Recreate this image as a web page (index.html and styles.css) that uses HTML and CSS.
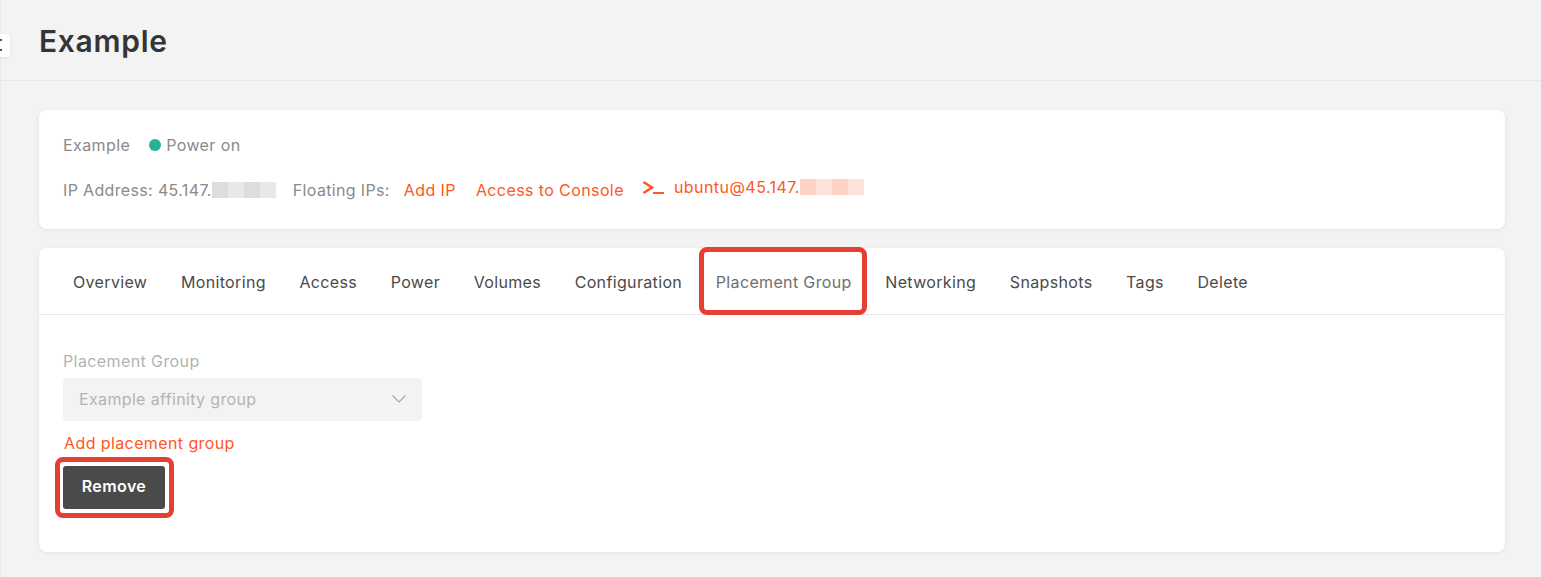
FILE: index.html
```html
<!DOCTYPE html>
<html lang="en">
<head>
<meta charset="utf-8">
<title>Example</title>
<link rel="stylesheet" href="styles.css">
</head>
<body>
<div class="app">
  <div class="side-toggle"><svg width="10" height="23" viewBox="0 0 10 23" aria-hidden="true"><rect x="0" y="5" width="2" height="2" fill="#555"/><rect x="0" y="15" width="2" height="2" fill="#555"/></svg></div>
  <header class="page-header"><h1>Example</h1></header>
  <main class="content">
    <section class="card info">
      <div class="info-row first">
        <span>Example</span>
        <span class="status"><i class="dot"></i>Power on</span>
      </div>
      <div class="info-row second">
        <span class="ip">IP Address: 45.147.<span class="redact grey"><i></i><i></i><i></i><i></i></span></span>
        <span class="floating">Floating IPs:</span>
        <a class="link add-ip">Add IP</a>
        <a class="link console">Access to Console</a>
        <svg class="term" width="24" height="16" viewBox="0 0 24 16" aria-hidden="true"><path d="M1.5 2 L10 7.5 L1.5 13" fill="none" stroke="#ff5722" stroke-width="2.6"/><rect x="11" y="12" width="11" height="2" fill="#ff5722"/></svg>
        <a class="link ssh">ubuntu@45.147.<span class="redact orange"><i></i><i></i><i></i><i></i></span></a>
      </div>
    </section>
    <section class="card detail">
      <nav class="tabs">
        <a class="tab">Overview</a>
        <a class="tab">Monitoring</a>
        <a class="tab">Access</a>
        <a class="tab">Power</a>
        <a class="tab">Volumes</a>
        <a class="tab">Configuration</a>
        <a class="tab active">Placement Group</a>
        <a class="tab">Networking</a>
        <a class="tab">Snapshots</a>
        <a class="tab">Tags</a>
        <a class="tab">Delete</a>
      </nav>
      <div class="panel">
        <label class="field-label">Placement Group</label>
        <div class="select">
          <span>Example affinity group</span>
          <svg width="16" height="10" viewBox="0 0 16 10" aria-hidden="true"><path d="M1.5 1.5 L8 8 L14.5 1.5" fill="none" stroke="#a8a8a8" stroke-width="1.2"/></svg>
        </div>
        <a class="link add-group">Add placement group</a>
        <button class="remove" type="button">Remove</button>
      </div>
    </section>
  </main>
  <div class="mark mark-tab"></div>
  <div class="mark mark-remove"></div>
</div>
</body>
</html>
```
FILE: styles.css
```css
* { box-sizing: border-box; }
html, body { margin: 0; height: 100%; }
body {
  background: #f3f3f3;
  font-family: Inter, "Liberation Sans", sans-serif;
  font-size: 16px;
  letter-spacing: .4px;
  color: #8a8a8a;
  overflow: hidden;
}
.app {
  position: relative;
  height: 577px;
  border-left: 1px solid #e8e8e8;
}
.side-toggle {
  position: absolute;
  left: -1px;
  top: 34px;
  width: 10px;
  height: 23px;
  background: #fff;
  border-radius: 0 4px 4px 0;
  box-shadow: 0 1px 3px rgba(0,0,0,.08);
  overflow: hidden;
}
.side-toggle svg { display: block; }
.page-header {
  height: 81px;
  padding: 2px 38px 0;
  border-bottom: 1px solid #e8e8e8;
  display: flex;
  align-items: center;
}
.page-header h1 {
  margin: 0;
  font-size: 30px;
  line-height: 40px;
  font-weight: 600;
  letter-spacing: .7px;
  color: #353535;
}
.content {
  padding: 29px 36px 0 38px;
  display: flex;
  flex-direction: column;
  gap: 19px;
}
.card {
  background: #fff;
  border-radius: 8px;
  box-shadow: 0 1px 4px rgba(0,0,0,.07);
}
.info {
  height: 119px;
  padding: 24px 24px 0;
}
.info-row { display: flex; align-items: center; }
.first { height: 22px; }
.second { height: 24px; margin-top: 22px; }
.status { display: flex; align-items: center; margin-left: 19px; }
.dot {
  width: 12px;
  height: 12px;
  border-radius: 50%;
  background: #24b394;
  margin-right: 5px;
}
.ip, .floating { letter-spacing: .35px; }
.ip { display: flex; align-items: center; }
.redact { display: inline-flex; }
.redact i { width: 16px; height: 16px; }
.redact.grey i:nth-child(odd) { background: #dcdddc; }
.redact.grey i:nth-child(even) { background: #e8e8e8; }
.redact.orange i:nth-child(odd) { background: #fcd3c6; }
.redact.orange i:nth-child(even) { background: #fde2da; }
.floating { margin-left: 17px; }
.link { color: #ff5722; text-decoration: none; }
.add-ip { margin-left: 14px; }
.console { margin-left: 20px; }
.term { margin-left: 18px; margin-top: -4px; }
.ssh { display: flex; align-items: center; margin-left: 8px; margin-top: -6px; letter-spacing: .45px; }
.detail { height: 304px; }
.tabs {
  height: 67px;
  padding: 2px 17px 0;
  display: flex;
  align-items: center;
  border-bottom: 1px solid #e8e8e8;
}
.tab {
  padding: 0 16.8px;
  color: #4a4a4a;
  letter-spacing: .35px;
  white-space: nowrap;
}
.tab:first-child { margin-left: .2px; }
.tab.active { color: #6f6f6f; }
.panel {
  padding: 34px 24px 0;
  display: flex;
  flex-direction: column;
  align-items: flex-start;
}
.field-label { color: #b3b3b3; line-height: 24px; }
.select {
  width: 359px;
  height: 43px;
  margin-top: 5px;
  padding: 0 15px 2px 16px;
  border-radius: 4px;
  background: #f3f3f3;
  color: #b3b3b3;
  letter-spacing: .35px;
  display: flex;
  align-items: center;
  justify-content: space-between;
}
.add-group { margin: 10px 0 0 1px; line-height: 24px; }
.remove {
  margin-top: 11px;
  width: 102px;
  height: 43px;
  padding: 0 0 4px;
  border: 0;
  border-radius: 3px;
  background: #4a4a4a;
  color: #fff;
  font: 600 16px Inter, "Liberation Sans", sans-serif;
  letter-spacing: .4px;
}
.mark {
  position: absolute;
  border: 5px solid #e53e33;
  border-radius: 8px;
}
.mark-tab { left: 698px; top: 247px; width: 168px; height: 68px; }
.mark-remove { left: 54px; top: 457px; width: 119px; height: 61px; }
```
